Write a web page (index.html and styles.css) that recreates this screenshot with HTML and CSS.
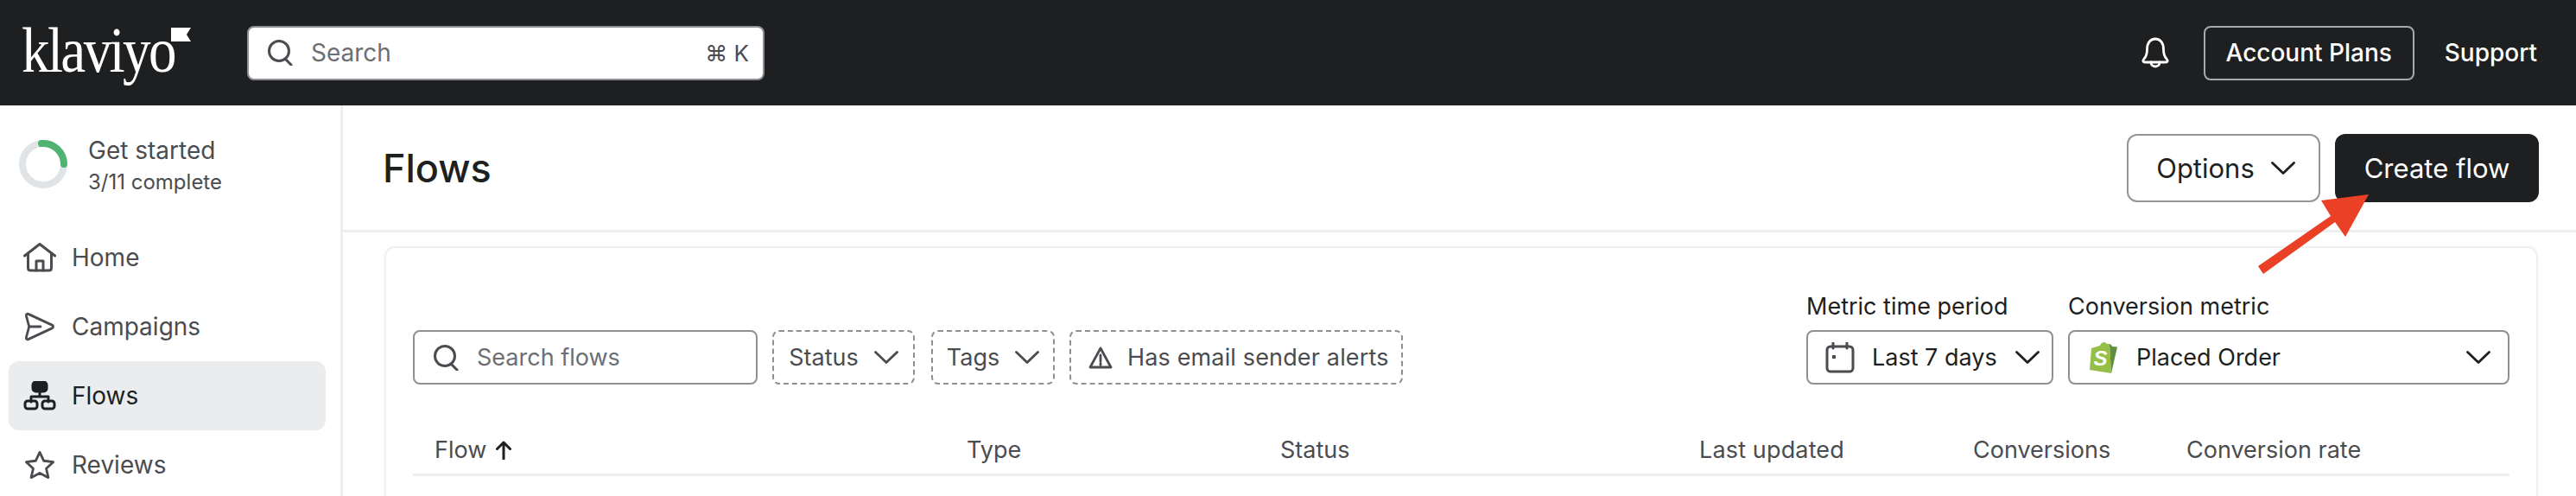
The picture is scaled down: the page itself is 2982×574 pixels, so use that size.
FILE: index.html
```html
<!DOCTYPE html>
<html lang="en">
<head>
    <meta charset="UTF-8">
    <title>Flows | Klaviyo</title>
    <link rel="stylesheet" href="styles.css">
</head>
<body>

<header class="topbar">
    <div class="logo">
        <span class="logo-word">klaviyo</span>
        <svg class="logo-flag" viewBox="0 0 23 16"><path d="M0 0H23L18 8L23 16H0Z" fill="#fff"/></svg>
    </div>
    <div class="global-search">
        <svg class="icon-search" viewBox="0 0 30 30"><circle cx="14" cy="13" r="11.5"/><path d="M21 22l7 7"/></svg>
        <span class="global-search-text">Search</span>
        <span class="shortcut">⌘ K</span>
    </div>
    <div class="topbar-right">
        <svg class="icon-bell" viewBox="0 0 34 36"><path d="M4 25C7 22 7.500 19 7.500 14C7.500 7 11 2 17 2S26.500 7 26.500 14C26.500 19 27 22 30 25C32 27.500 31 29 29 29H5C3 29 2 27.500 4 25Z"/><path d="M12 29C12 32 14 34 17 34S22 32 22 29"/></svg>
        <a class="plans-btn" href="#">Account Plans</a>
        <a class="support-link" href="#">Support</a>
    </div>
</header>

<div class="layout">
    <nav class="sidebar">
        <div class="get-started">
            <svg class="progress-ring" viewBox="0 0 56 56">
                <circle cx="28" cy="28" r="24" class="ring-bg"/>
                <path d="M26 4.100A24 24 0 0 1 52 28" class="ring-fill"/>
            </svg>
            <div class="get-started-text">
                <div class="get-started-title">Get started</div>
                <div class="get-started-sub">3/11 complete</div>
            </div>
        </div>
        <a class="nav-item" href="#">
            <svg viewBox="0 0 38 34"><path d="M1.500 15L19 1.500L36.500 15"/><path d="M5.500 12V29C5.500 31 6.500 32 8.500 32H29.500C31.500 32 32.500 31 32.500 29V12"/><path d="M15 32V21H23V32"/></svg>
            Home
        </a>
        <a class="nav-item" href="#">
            <svg viewBox="0 0 38 36"><path d="M5 2.500L34 16C36 17 36 19 34 20L5 33.500C3.500 34 2 33 2.500 31L6 18L2.500 5C2 3 3.500 2 5 2.500Z"/><path d="M6 18H20"/></svg>
            Campaigns
        </a>
        <a class="nav-item active" href="#">
            <svg viewBox="0 0 38 34"><rect x="11" y="1" width="16" height="11" rx="3.500" fill="#1e1f21"/><path d="M19 12V18M9 24V18H29V24"/><rect x="2" y="23" width="14" height="9" rx="3"/><rect x="22" y="23" width="14" height="9" rx="3"/></svg>
            Flows
        </a>
        <a class="nav-item" href="#">
            <svg viewBox="0 0 38 36"><path d="M19 2.500L24 13L35.500 14.500L27 22.500L29.500 33.500L19 28L8.500 33.500L11 22.500L2.500 14.500L14 13Z"/></svg>
            Reviews
        </a>
    </nav>

    <main class="content">
        <div class="page-head">
            <h1>Flows</h1>
            <div class="page-actions">
                <button class="btn btn-outline">Options
                    <svg class="chevron" viewBox="0 0 28 15"><path d="M1.500 1.500L14 13.500L26.500 1.500"/></svg>
                </button>
                <button class="btn btn-dark">Create flow</button>
            </div>
        </div>

        <section class="card">
            <div class="toolbar">
                <div class="search-flows">
                    <svg class="icon-search" viewBox="0 0 30 30"><circle cx="14" cy="13" r="11.500"/><path d="M21 22l7 7"/></svg>
                    <span>Search flows</span>
                </div>
                <div class="filter filter-status">Status
                    <svg class="chevron" viewBox="0 0 28 15"><path d="M1.500 1.500L14 13.500L26.500 1.500"/></svg>
                </div>
                <div class="filter filter-tags">Tags
                    <svg class="chevron" viewBox="0 0 28 15"><path d="M1.500 1.500L14 13.500L26.500 1.500"/></svg>
                </div>
                <div class="filter filter-alerts">
                    <svg class="icon-warning" viewBox="0 0 28 28"><path d="M14 3L26 25H2Z"/><path d="M14 11V18M14 20.500V22.500"/></svg>
                    Has email sender alerts
                </div>
                <div class="field field-period">
                    <label>Metric time period</label>
                    <div class="select">
                        <svg class="icon-calendar" viewBox="0 0 34 36"><rect x="2" y="5" width="30" height="29" rx="4"/><path d="M9 1V7M25 1V7"/><rect x="8" y="15" width="4" height="4" fill="#4a4c50" stroke="none"/></svg>
                        <span class="select-text">Last 7 days</span>
                        <svg class="chevron" viewBox="0 0 28 15"><path d="M1.500 1.500L14 13.500L26.500 1.500"/></svg>
                    </div>
                </div>
                <div class="field field-metric">
                    <label>Conversion metric</label>
                    <div class="select">
                        <svg class="icon-shopify" viewBox="0 0 34 38">
                            <path d="M3 8L13 5C15 0 19 0 21 3L24 3L26 37L1 33Z" fill="#95bf47"/>
                            <path d="M24 3L26 4L27 6L33 6.500L26 37Z" fill="#5e8e3e"/>
                            <text x="13.500" y="28" class="shopify-s">S</text>
                        </svg>
                        <span class="select-text">Placed Order</span>
                        <svg class="chevron" viewBox="0 0 28 15"><path d="M1.500 1.500L14 13.500L26.500 1.500"/></svg>
                    </div>
                </div>
            </div>

            <div class="table-head">
                <div class="col-flow">Flow
                    <svg class="sort-arrow" viewBox="0 0 20 22"><path d="M10 21V2M2.500 9.500L10 2L17.500 9.500"/></svg>
                </div>
                <div class="col-type">Type</div>
                <div class="col-status">Status</div>
                <div class="col-updated">Last updated</div>
                <div class="col-conv">Conversions</div>
                <div class="col-rate">Conversion rate</div>
            </div>
        </section>
    </main>
</div>

<!-- annotation over the screenshot -->
<svg class="callout-arrow" viewBox="0 0 130 94"><path d="M128 1L73 8L84 26L0 84L6 93L89 33L101 50Z"/></svg>

</body>
</html>
```

FILE: styles.css
```css
* { margin: 0; padding: 0; box-sizing: border-box; font-family: 'Inter', 'DejaVu Sans', sans-serif; }
html, body { height: 100%; overflow: hidden; }
body { background: #fff; color: #1e1f21; font-size: 28px; position: relative; }
a { color: inherit; text-decoration: none; }
svg { fill: none; stroke: currentColor; stroke-width: 3; stroke-linecap: round; stroke-linejoin: round; flex-shrink: 0; }

/* top bar */
.topbar { height: 122px; background: #1e1f21; color: #fff; display: flex; align-items: center; padding: 0 45px 0 25px; }
.logo { width: 261px; display: flex; align-items: flex-start; height: 62px; }
.logo-word { font-family: 'Liberation Serif', serif; font-size: 74px; line-height: 56px; color: #fff; letter-spacing: -3px; display: inline-block; transform: scaleX(0.88); transform-origin: left top; width: 173px; }
.logo-flag { width: 23px; height: 16px; stroke: none; margin-top: 2px; }
.global-search { width: 599px; height: 63px; background: #fff; border: 2px solid #8f9093; border-radius: 8px; display: flex; align-items: center; padding: 0 16px 0 21px; color: #6d6e72; }
.icon-search { width: 30px; height: 30px; color: #4a4c50; margin-right: 21px; }
.global-search-text { flex: 1; }
.shortcut { color: #4a4c50; font-size: 26px; }
.topbar-right { margin-left: auto; display: flex; align-items: center; }
.icon-bell { width: 34px; height: 36px; margin-right: 39px; stroke-width: 2.800; }
.plans-btn { width: 244px; height: 63px; border: 2px solid #a8a9ab; border-radius: 8px; display: flex; align-items: center; justify-content: center; font-weight: 500; }
.support-link { margin-left: 35px; font-weight: 500; }

/* sidebar + main */
.layout { display: flex; height: calc(100vh - 122px); overflow: hidden; }
.sidebar { width: 397px; flex-shrink: 0; border-right: 3px solid #eeeeef; padding: 0 17px 0 10px; color: #4a4c50; }
.get-started { height: 136px; display: flex; align-items: center; padding-left: 12px; gap: 24px; padding-bottom: 1px; }
.get-started-text { margin-top: 2px; }
.progress-ring { width: 56px; height: 56px; }
.ring-bg { stroke: #e1e4e6; stroke-width: 8; }
.ring-fill { stroke: #50b371; stroke-width: 8; }
.get-started-title { font-size: 28px; line-height: 40px; }
.get-started-sub { font-size: 24px; line-height: 34px; }
.nav-item { height: 80px; display: flex; align-items: center; padding-left: 17px; gap: 18px; border-radius: 12px; }
.nav-item svg { width: 38px; height: 34px; }
.nav-item.active { background: #ebecee; color: #1e1f21; }

.content { flex: 1; min-width: 0; }
.page-head { height: 147px; border-bottom: 3px solid #eeeeef; display: flex; align-items: center; justify-content: space-between; padding: 0 43px 0 46px; }
h1 { font-size: 45px; font-weight: 500; }
.page-actions { display: flex; gap: 17px; }
.btn { height: 79px; border-radius: 12px; font-size: 31px; display: flex; align-items: center; justify-content: center; }
.btn-outline { width: 224px; background: #fff; border: 2px solid #949597; color: #1e1f21; gap: 19px; padding-left: 5px; }
.btn-dark { width: 236px; background: #1e1f21; border: none; color: #fff; }
.chevron { width: 28px; height: 15px; stroke-width: 2.800; }

/* card */
.card { margin: 16px 44px 0 48px; height: 400px; border: 2px solid #efefef; border-radius: 12px; box-shadow: 0 2px 8px rgba(0,0,0,0.04); padding: 0 31px; font-size: 27px; }
.toolbar { display: flex; align-items: flex-end; height: 158px; color: #4a4c50; }
.search-flows { width: 399px; height: 63px; border: 2px solid #8f9093; border-radius: 8px; display: flex; align-items: center; padding-left: 21px; color: #6d6e72; margin-right: 17px; }
.filter { height: 63px; border: 2px dashed #8f9093; border-radius: 8px; display: flex; align-items: center; justify-content: center; margin-right: 17px; }
.filter-status { width: 165px; gap: 18px; margin-right: 19px; }
.filter-tags { width: 143px; gap: 18px; }
.filter-alerts { width: 386px; gap: 17px; justify-content: flex-start; padding-left: 20px; letter-spacing: 0.15px; }
.field { display: flex; flex-direction: column; }
.field label { line-height: 40px; margin-bottom: 7px; color: #1e1f21; }
.field-period { margin-left: auto; width: 286px; margin-right: 17px; }
.field-metric { width: 511px; }
.select { height: 63px; border: 2px solid #8f9093; border-radius: 8px; display: flex; align-items: center; color: #1e1f21; }
.field-period .select { padding: 0 14px 0 20px; }
.field-metric .select { padding: 0 20px 0 22px; }
.select-text { flex: 1; }
.field-period .select-text { margin-left: 20px; }
.field-metric .select-text { margin-left: 21px; }
.icon-calendar { width: 34px; height: 36px; color: #4a4c50; }
.icon-shopify { width: 34px; height: 38px; stroke: none; }
.shopify-s { font-family: 'Liberation Sans', sans-serif; font-size: 24px; font-weight: bold; font-style: italic; fill: #fff; text-anchor: middle; }
.icon-warning { width: 28px; height: 28px; stroke-width: 2.800; }

.table-head { display: grid; grid-template-columns: 616px 363px 485px 317px 247px 1fr; margin-top: 58px; height: 48px; border-bottom: 3px solid #eeeeef; color: #4a4c50; padding-left: 25px; line-height: 36px; }
.col-flow { display: flex; align-items: flex-start; gap: 10px; }
.col-updated { letter-spacing: 0.15px; }
.sort-arrow { width: 20px; height: 22px; margin-top: 7px; color: #1e1f21; }

/* red arrow annotation */
.callout-arrow { position: absolute; left: 2614px; top: 224px; width: 130px; height: 94px; stroke: none; fill: #ea4025; }
.callout-arrow path { stroke: none; }
```
